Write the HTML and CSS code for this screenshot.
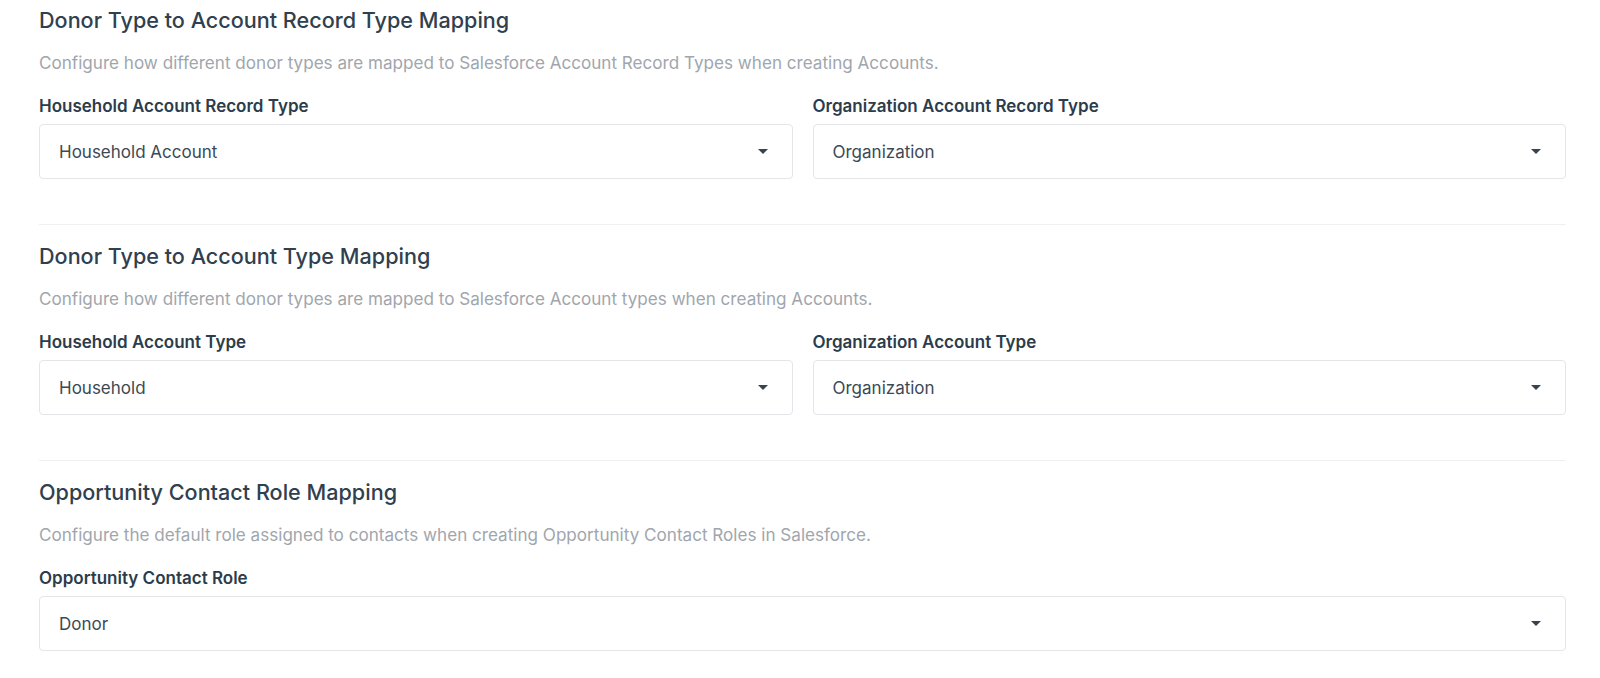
FILE: index.html
```html
<!DOCTYPE html>
<html lang="en">
<head>
  <meta charset="UTF-8">
  <title>Salesforce Mapping Settings</title>
  <link rel="stylesheet" href="styles.css">
</head>
<body>
<div class="page">

  <section class="mapping">
    <h2 class="mapping-title">Donor Type to Account Record Type Mapping</h2>
    <p class="mapping-desc">Configure how different donor types are mapped to Salesforce Account Record Types when creating Accounts.</p>
    <div class="fields two">
      <div class="field">
        <label class="field-label">Household Account Record Type</label>
        <div class="select">
          <span>Household Account</span>
          <svg class="caret" width="10" height="5" viewBox="0 0 10 5"><path d="M0 0h10L5 5z"/></svg>
        </div>
      </div>
      <div class="field">
        <label class="field-label">Organization Account Record Type</label>
        <div class="select">
          <span>Organization</span>
          <svg class="caret" width="10" height="5" viewBox="0 0 10 5"><path d="M0 0h10L5 5z"/></svg>
        </div>
      </div>
    </div>
  </section>

  <section class="mapping">
    <h2 class="mapping-title">Donor Type to Account Type Mapping</h2>
    <p class="mapping-desc">Configure how different donor types are mapped to Salesforce Account types when creating Accounts.</p>
    <div class="fields two">
      <div class="field">
        <label class="field-label">Household Account Type</label>
        <div class="select">
          <span>Household</span>
          <svg class="caret" width="10" height="5" viewBox="0 0 10 5"><path d="M0 0h10L5 5z"/></svg>
        </div>
      </div>
      <div class="field">
        <label class="field-label">Organization Account Type</label>
        <div class="select">
          <span>Organization</span>
          <svg class="caret" width="10" height="5" viewBox="0 0 10 5"><path d="M0 0h10L5 5z"/></svg>
        </div>
      </div>
    </div>
  </section>

  <section class="mapping last">
    <h2 class="mapping-title">Opportunity Contact Role Mapping</h2>
    <p class="mapping-desc">Configure the default role assigned to contacts when creating Opportunity Contact Roles in Salesforce.</p>
    <div class="fields">
      <div class="field">
        <label class="field-label">Opportunity Contact Role</label>
        <div class="select">
          <span>Donor</span>
          <svg class="caret" width="10" height="5" viewBox="0 0 10 5"><path d="M0 0h10L5 5z"/></svg>
        </div>
      </div>
    </div>
  </section>

</div>
</body>
</html>
```

FILE: styles.css
```css
*, *:before, *:after {
  box-sizing: border-box;
}

body {
  margin: 0;
  padding: 0;
  background: #fff;
  font-family: Inter, "Noto Sans", sans-serif;
  color: #2d3d4b;
}

.page {
  padding: 6px 34px 0 39px;
}

.mapping {
  border-bottom: 1px solid #eef0f2;
  padding-bottom: 45px;
  margin-bottom: 17px;
}

.mapping.last {
  border-bottom: none;
}

.mapping-title {
  margin: 0;
  font-size: 21.6px;
  line-height: 28px;
  font-weight: 500;
  color: #30404e;
}

.mapping-desc {
  margin: 17px 0 0;
  font-size: 17.1px;
  line-height: 24px;
  color: #a0a6ad;
}

.fields {
  display: grid;
  grid-template-columns: 1fr;
  gap: 20px;
  margin-top: 21px;
}

.fields.two {
  grid-template-columns: 1fr 1fr;
}

.field-label {
  display: block;
  font-size: 17px;
  line-height: 20px;
  font-weight: 600;
  color: #2c3c4a;
  margin-bottom: 8px;
}

.select {
  display: flex;
  align-items: center;
  justify-content: space-between;
  height: 55px;
  padding: 0 24px 0 19px;
  border: 1px solid #e3e5e8;
  border-radius: 4px;
  font-size: 17px;
  color: #3c4955;
}

.caret {
  fill: #37434e;
}
```
